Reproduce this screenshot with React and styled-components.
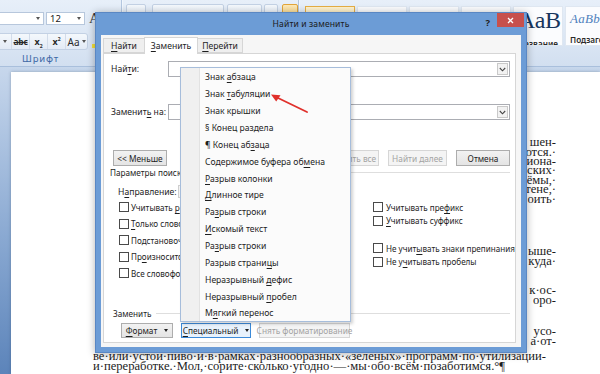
import React from "react";
import styled, { createGlobalStyle } from "styled-components";

const GlobalStyle = createGlobalStyle`
  html, body { margin: 0; padding: 0; background: #c6d6ec; }
  body { font-family: "Noto Sans", "Liberation Sans", Arial, sans-serif; }
  * { box-sizing: border-box; }
`;

const Screen = styled.div`
  position: relative;
  width: 600px;
  height: 374px;
  overflow: hidden;
  display: flex;
  flex-direction: column;
`;

/* ---------------- Ribbon ---------------- */
const Ribbon = styled.div`
  height: 67px;
  flex: none;
  display: flex;
  background: linear-gradient(#e7eff9, #dbe6f4 60%, #d2dff0);
  border-bottom: 1px solid #a9bfdc;
`;

const Group = styled.div`
  flex: none;
  width: ${(p) => p.$w}px;
  margin-left: ${(p) => p.$ml || 0}px;
  display: flex;
  flex-direction: column;
  border-right: 1px solid #b4c7e0;
  box-shadow: 1px 0 0 #f1f6fc;
  overflow: hidden;
`;

const GroupLabel = styled.div`
  margin-top: auto;
  height: 13px;
  line-height: 12px;
  text-align: center;
  font-size: 9.5px;
  letter-spacing: 0.8px;
  color: #3d67a5;
`;

const RibbonRow = styled.div`
  display: flex;
  align-items: center;
  gap: ${(p) => p.$gap || 0}px;
  height: ${(p) => p.$h}px;
  margin-top: ${(p) => p.$mt}px;
`;

const Combo = styled.div`
  width: ${(p) => p.$w}px;
  height: 13px;
  background: #fff;
  border: 1px solid #b7c7dc;
  display: flex;
  align-items: center;
  justify-content: space-between;
  padding: 0 3px;
  font-size: 9.5px;
  color: #222;
`;

const TinyArrow = styled.span`
  width: 0;
  height: 0;
  border-left: 2.5px solid transparent;
  border-right: 2.5px solid transparent;
  border-top: 3px solid ${(p) => p.$c || "#555"};
  flex: none;
`;

const BigA = styled.span`
  font-family: "Liberation Serif", serif;
  font-size: 15px;
  color: #333;
  margin-left: 2px;
`;

const IconStrip = styled.div`
  display: flex;
  height: 17px;
  border: 1px solid #c3d1e4;
  border-radius: 3px;
  background: linear-gradient(#f4f8fc, #e3ebf6);
`;

const IconBtn = styled.div`
  width: ${(p) => p.$w}px;
  display: flex;
  align-items: center;
  justify-content: ${(p) => p.$jc || "center"};
  padding-right: ${(p) => p.$pr || 0}px;
  gap: 2px;
  border-right: 1px solid #d2dcea;
  font-size: 9px;
  font-weight: 700;
  color: #2a2a2a;
  &:last-child { border-right: none; }
`;

const Strike = styled.span`
  text-decoration: line-through;
  font-size: 8.5px;
  letter-spacing: -0.3px;
`;

const Highlight = styled.span`
  display: block;
  width: 8px;
  height: 4px;
  margin-top: 8px;
  background: #f4e13a;
`;

const ParaBox = styled.div`
  width: ${(p) => p.$w}px;
  height: 16px;
  margin-left: ${(p) => p.$ml}px;
  border: 1px solid ${(p) => (p.$on ? "#e2a53a" : "#c3d1e4")};
  border-radius: 2px;
  background: ${(p) => (p.$on ? "linear-gradient(#fde9b8, #f9d37c)" : "linear-gradient(#f4f8fc, #e3ebf6)")};
`;

const Gallery = styled.div`
  display: flex;
  gap: 2px;
  margin-top: 6px;
  padding-left: 6px;
`;

const StyleItem = styled.div`
  width: 50px;
  height: 40px;
  flex: none;
  display: flex;
  flex-direction: column;
  padding: 0 4px;
  overflow: hidden;
  border: 1px solid ${(p) => (p.$on ? "#e6ae45" : "#dfe7f1")};
  background: ${(p) => (p.$on ? "linear-gradient(#fff3cf, #fde3a0)" : "#fbfcfe")};
`;

const Sample = styled.div`
  height: 27px;
  display: flex;
  align-items: center;
  white-space: nowrap;
  font-family: "Liberation Serif", "DejaVu Serif", serif;
  font-size: ${(p) => p.$fs}px;
  font-style: ${(p) => (p.$it ? "italic" : "normal")};
  color: ${(p) => p.$c};
  letter-spacing: ${(p) => (p.$it ? "0.3px" : "-0.5px")};
`;

const StyleName = styled.div`
  font-size: 8.2px;
  white-space: nowrap;
  color: #2b2b2b;
  font-weight: 600;
  margin-top: 4px;
`;

/* ---------------- Document ---------------- */
const DocArea = styled.div`
  flex: 1;
  display: flex;
  padding-top: 5px;
  background: linear-gradient(#c7d7ec, #8aa9d2 55%, #5c84ba);
`;

const Page = styled.div`
  flex: 1;
  margin-left: 11px;
  background: #fff;
  padding: 66.3px 0 0 82px;
  box-shadow: 0 0 3px rgba(40, 60, 90, 0.35);
`;

const Para = styled.div`
  margin-top: ${(p) => p.$mt}px;
`;

const Line = styled.div`
  width: 463px;
  height: 9.4px;
  text-align: ${(p) => (p.$end ? "right" : "left")};
  white-space: nowrap;
  font-family: "Liberation Serif", "DejaVu Serif", serif;
  font-size: 12.6px;
  line-height: 9.4px;
  color: #1c1c1c;
`;

/* ---------------- Dialog ---------------- */
const Dialog = styled.div`
  position: absolute;
  left: 95px;
  top: 12px;
  width: 432px;
  height: 341px;
  background: #6c9cd6;
  border: 1px solid #5a87c3;
  display: flex;
  flex-direction: column;
  box-shadow: 0 1px 8px rgba(0, 0, 0, 0.3);
`;

const TitleBar = styled.div`
  height: 22px;
  flex: none;
  display: grid;
  grid-template-columns: 1fr auto 1fr;
  align-items: center;
`;

const Title = styled.div`
  grid-column: 2;
  font-size: 8.6px;
  color: #1b1b1b;
  letter-spacing: 0.1px;
`;

const TitleControls = styled.div`
  justify-self: end;
  align-self: start;
  display: flex;
  align-items: flex-start;
  gap: 7px;
  margin-right: 2px;
`;

const Help = styled.span`
  font-size: 9.5px;
  font-weight: 700;
  color: #1e1e1e;
  margin-top: 3px;
`;

const Close = styled.div`
  width: 27px;
  height: 14px;
  background: #c7504c;
  display: flex;
  align-items: center;
  justify-content: center;
`;

const Client = styled.div`
  flex: 1;
  margin: 0 5px 5px;
  background: #f6f6f6;
  padding: 2px 5px 4px 2px;
  display: flex;
  flex-direction: column;
`;

const Tabs = styled.div`
  display: flex;
  align-items: flex-end;
  height: 16px;
  position: relative;
  z-index: 1;
`;

const Tab = styled.div`
  height: ${(p) => (p.$active ? 17 : 15)}px;
  margin-bottom: ${(p) => (p.$active ? -1 : 0)}px;
  padding: 0 ${(p) => p.$px}px;
  display: flex;
  align-items: center;
  font-size: 8.6px;
  color: #1e1e1e;
  background: ${(p) => (p.$active ? "#fff" : "#efefef")};
  border: 1px solid #d6d6d6;
  border-bottom: ${(p) => (p.$active ? "none" : "1px solid #d6d6d6")};
  margin-left: ${(p) => (p.$active ? -1 : 0)}px;
  margin-right: ${(p) => (p.$active ? -1 : 0)}px;
  position: relative;
  z-index: ${(p) => (p.$active ? 2 : 1)};
`;

const Panel = styled.div`
  flex: 1;
  background: #fff;
  border: 1px solid #d6d6d6;
  padding: 7px 5px 0 7px;
  display: flex;
  flex-direction: column;
  font-size: 8.6px;
  color: #1e1e1e;
`;

const FieldRow = styled.div`
  display: grid;
  grid-template-columns: 57px 1fr;
  align-items: center;
  height: 16px;
  white-space: nowrap;
  margin-top: ${(p) => p.$mt}px;
`;

const Input = styled.div`
  height: 16px;
  background: #fff;
  border: 1px solid #abadb3;
  display: flex;
  justify-content: flex-end;
  padding: 1px;
`;

const InputArrow = styled.div`
  width: 11px;
  border: 1px solid #c9c9c9;
  background: #f2f2f2;
  display: flex;
  align-items: center;
  justify-content: center;
`;

const Row = styled.div`
  display: flex;
  align-items: center;
  height: ${(p) => p.$h}px;
  margin-top: ${(p) => p.$mt}px;
  padding-left: ${(p) => p.$pl || 0}px;
  gap: ${(p) => p.$gap || 0}px;
  white-space: nowrap;
`;

const Spacer = styled.div`
  flex: 1;
`;

const Button = styled.div`
  width: ${(p) => p.$w}px;
  height: ${(p) => p.$h || 16}px;
  flex: none;
  display: flex;
  align-items: center;
  justify-content: center;
  gap: 7px;
  font-size: 8.3px;
  white-space: nowrap;
  color: ${(p) => (p.$disabled ? "#a3a3a3" : "#1e1e1e")};
  background: ${(p) =>
    p.$focus ? "#e8f2fc" : p.$disabled ? "#f4f4f4" : "linear-gradient(#f2f2f2, #e4e4e4)"};
  border: 1px solid ${(p) => (p.$focus ? "#3c8ad8" : p.$disabled ? "#d6d6d6" : "#adadad")};
`;

const GroupHead = styled.div`
  display: flex;
  align-items: center;
  gap: 5px;
  height: 11px;
  margin-top: ${(p) => p.$mt}px;
  margin-left: ${(p) => p.$ml || 0}px;
  font-size: 8.2px;
  white-space: nowrap;
`;

const HeadLine = styled.div`
  flex: 1;
  height: 1px;
  background: #dedede;
`;

const DirLabel = styled.span`
  width: 60px;
`;

const DirCombo = styled.div`
  width: 100px;
  height: 13px;
  border: 1px solid #cfcfcf;
  background: #f5f5f5;
`;

const Options = styled.div`
  display: grid;
  grid-template-columns: 254px 1fr;
  margin-top: 2px;
  padding-left: 8px;
`;

const OptCol = styled.div`
  display: flex;
  flex-direction: column;
  gap: ${(p) => p.$gap}px;
`;

const Check = styled.div`
  display: flex;
  align-items: center;
  height: 14px;
  gap: ${(p) => p.$gap}px;
  margin-top: ${(p) => p.$mt || 0}px;
  white-space: nowrap;
  font-size: 8.1px;
`;

const Box = styled.span`
  width: 10px;
  height: 10px;
  flex: none;
  border: 1px solid #4a4a4a;
  background: #fff;
`;

const U = styled.u`
  text-decoration: underline;
  text-underline-offset: 1.5px;
  text-decoration-thickness: 1px;
`;

/* ---------------- Menu ---------------- */
const Menu = styled.div`
  position: absolute;
  left: 180px;
  top: 67px;
  width: 171px;
  height: 255px;
  padding: 1px;
  border: 1px solid #a6bddb;
  background: linear-gradient(to right, #f0f0f0 0 18px, #e2e2e2 18px 19px, #fbfbfb 19px);
  box-shadow: 2px 2px 3px rgba(0, 0, 0, 0.18);
  display: flex;
  flex-direction: column;
  z-index: 5;
`;

const MenuItem = styled.div`
  height: 16.86px;
  flex: none;
  display: flex;
  align-items: center;
  padding-left: 23px;
  font-size: 8.6px;
  color: #1e1e1e;
  white-space: pre;
`;

const ArrowSvg = styled.svg`
  position: absolute;
  left: 262px;
  top: 86px;
  z-index: 6;
`;

/* ---------------- Data ---------------- */
const paras = [
  { mt: 0, lines: ["шен-", "ются.·", "циона-", "ских·", "ёмы,·", "тене,·", "оить·", ""] },
  { mt: 34, lines: ["ыше-", "куда·", ""] },
  { mt: 10.6, lines: ["к·ос-", "оро-", ""] },
  { mt: 12.8, lines: ["усо-", "а·от-"] },
];

const menuItems = [
  ["Знак ", <U key="u">а</U>, "бзаца"],
  ["Знак ", <U key="u">т</U>, "абуляции"],
  ["Знак крышки"],
  ["§ Конец раздела"],
  ["¶ Конец аб", <U key="u">з</U>, "аца"],
  ["Содержимое буфера об", <U key="u">м</U>, "ена"],
  [<U key="u">Р</U>, "азрыв колонки"],
  [<U key="u">Д</U>, "линное тире"],
  ["Ра", <U key="u">з</U>, "рыв строки"],
  [<U key="u">И</U>, "скомый текст"],
  ["Ра", <U key="u">з</U>, "рыв строки"],
  ["Разрыв страни", <U key="u">ц</U>, "ы"],
  ["Неразрывный ", <U key="u">д</U>, "ефис"],
  ["Неразрывный ", <U key="u">п</U>, "робел"],
  ["М", <U key="u">я</U>, "гкий перенос"],
];

const Chevron = () => (
  <svg width="7" height="5" viewBox="0 0 7 5">
    <path d="M0.8 1 L3.5 3.8 L6.2 1" fill="none" stroke="#444" strokeWidth="1.1" />
  </svg>
);

export default function App() {
  return (
    <Screen>
      <GlobalStyle />
      <Ribbon>
        <Group $w={162} $ml={-40}>
          <RibbonRow $h={13} $mt={12} $gap={2}>
            <Combo $w={84}>
              <span />
              <TinyArrow />
            </Combo>
            <Combo $w={39}>
              <span>12</span>
              <TinyArrow />
            </Combo>
            <BigA>A</BigA>
          </RibbonRow>
          <RibbonRow $h={17} $mt={8}>
            <IconStrip>
              <IconBtn $w={14} />
              <IconBtn $w={14} />
              <IconBtn $w={23} $jc="flex-end" $pr={4}>
                <TinyArrow />
              </IconBtn>
              <IconBtn $w={18}>
                <Strike>abc</Strike>
              </IconBtn>
              <IconBtn $w={18}>
                <span>
                  x<sub style={{ fontSize: 5 }}>2</sub>
                </span>
              </IconBtn>
              <IconBtn $w={18}>
                <span>
                  x<sup style={{ fontSize: 5 }}>2</sup>
                </span>
              </IconBtn>
              <IconBtn $w={21}>
                <span style={{ fontWeight: 400, fontSize: 10 }}>Aa</span>
                <TinyArrow />
              </IconBtn>
            </IconStrip>
            <IconBtn $w={16}>
              <Highlight />
            </IconBtn>
          </RibbonRow>
          <GroupLabel>Шрифт</GroupLabel>
        </Group>
        <Group $w={177}>
          <RibbonRow $h={16} $mt={4}>
            <ParaBox $w={20} $ml={4} />
            <ParaBox $w={72} $ml={6} />
            <ParaBox $w={35} $ml={3} />
            <ParaBox $w={14} $ml={2} />
            <ParaBox $w={16} $ml={4} $on />
          </RibbonRow>
        </Group>
        <Group $w={340}>
          <Gallery>
            <StyleItem $on />
            <StyleItem />
            <StyleItem />
            <StyleItem />
            <StyleItem>
              <Sample $fs={24} $c="#17365d">AaB</Sample>
              <StyleName>Название</StyleName>
            </StyleItem>
            <StyleItem>
              <Sample $fs={13} $c="#4f81bd" $it>
                AaBbC
              </Sample>
              <StyleName>Подзаголовок</StyleName>
            </StyleItem>
          </Gallery>
        </Group>
      </Ribbon>

      <DocArea>
        <Page>
          {paras.map((p, i) => (
            <Para key={i} $mt={p.mt}>
              {p.lines.map((t, j) => (
                <Line key={j} $end>
                  {t}
                </Line>
              ))}
            </Para>
          ))}
          <Para $mt={6.2}>
            <Line>ве·или·устой·пиво·и·в·рамках·разнообразных·«зеленых»·программ·по·утилизации-</Line>
            <Line>и·переработке.·Мол,·сорите·сколько·угодно·—·мы·обо·всём·позаботимся.°¶</Line>
          </Para>
        </Page>
      </DocArea>

      <Dialog>
        <TitleBar>
          <Title>Найти и заменить</Title>
          <TitleControls>
            <Help>?</Help>
            <Close>
              <svg width="7" height="7" viewBox="0 0 7 7">
                <path d="M1 1 L6 6 M6 1 L1 6" stroke="#fff" strokeWidth="1.3" />
              </svg>
            </Close>
          </TitleControls>
        </TitleBar>
        <Client>
          <Tabs>
            <Tab $px={7}>
              <span>
                <U>Н</U>айти
              </span>
            </Tab>
            <Tab $px={6} $active>
              <span>
                <U>З</U>аменить
              </span>
            </Tab>
            <Tab $px={4}>
              <span>
                <U>П</U>ерейти
              </span>
            </Tab>
          </Tabs>
          <Panel>
            <FieldRow $mt={0}>
              <span>
                Най<U>т</U>и:
              </span>
              <Input>
                <InputArrow>
                  <Chevron />
                </InputArrow>
              </Input>
            </FieldRow>
            <FieldRow $mt={27}>
              <span>
                Заменит<U>ь</U> на:
              </span>
              <Input>
                <InputArrow>
                  <Chevron />
                </InputArrow>
              </Input>
            </FieldRow>
            <Row $h={16} $mt={30} $pl={2} $gap={9}>
              <Button $w={54}>&lt;&lt; Меньше</Button>
              <Spacer />
              <Button $w={60}>Заменить</Button>
              <Button $w={60} $disabled>
                Заменить все
              </Button>
              <Button $w={59} $disabled>
                Найти далее
              </Button>
              <Button $w={54}>Отмена</Button>
            </Row>
            <GroupHead $mt={1} $ml={-1}>
              <span>Параметры поиска</span>
              <HeadLine />
            </GroupHead>
            <Row $h={13} $mt={7} $pl={7}>
              <DirLabel>
                Н<U>а</U>правление:
              </DirLabel>
              <DirCombo />
            </Row>
            <Options>
              <OptCol $gap={2.5}>
                <Check $gap={2}>
                  <Box />
                  <span>
                    Учитывать <U>р</U>егистр
                  </span>
                </Check>
                <Check $gap={2}>
                  <Box />
                  <span>
                    <U>Т</U>олько слово целиком
                  </span>
                </Check>
                <Check $gap={2}>
                  <Box />
                  <span>Подстановочные знаки</span>
                </Check>
                <Check $gap={2}>
                  <Box />
                  <span>
                    Пр<U>о</U>износится как
                  </span>
                </Check>
                <Check $gap={2}>
                  <Box />
                  <span>Все словоформы</span>
                </Check>
              </OptCol>
              <OptCol $gap={0}>
                <Check $gap={3}>
                  <Box />
                  <span>
                    Учитывать пре<U>ф</U>икс
                  </span>
                </Check>
                <Check $gap={3} $mt={-0.5}>
                  <Box />
                  <span>
                    <U>У</U>читывать суффикс
                  </span>
                </Check>
                <Check $gap={3} $mt={13.5}>
                  <Box />
                  <span>
                    Не учит<U>ы</U>вать знаки препинания
                  </span>
                </Check>
                <Check $gap={3} $mt={-0.5}>
                  <Box />
                  <span>
                    Не у<U>ч</U>итывать пробелы
                  </span>
                </Check>
              </OptCol>
            </Options>
            <GroupHead $mt={28} $ml={2}>
              <span>Заменить</span>
              <HeadLine />
            </GroupHead>
            <Row $h={15} $mt={4} $pl={10} $gap={8}>
              <Button $w={52} $h={15}>
                <span>
                  <U>Ф</U>ормат
                </span>
                <TinyArrow $c="#222" />
              </Button>
              <Button $w={70} $h={15} $focus>
                <span>
                  <U>С</U>пециальный
                </span>
                <TinyArrow $c="#222" />
              </Button>
              <Button $w={91} $h={15} $disabled>
                Снять форматирование
              </Button>
            </Row>
          </Panel>
        </Client>
      </Dialog>

      <Menu>
        {menuItems.map((parts, i) => (
          <MenuItem key={i}>
            <span>{parts}</span>
          </MenuItem>
        ))}
      </Menu>

      <ArrowSvg width="50" height="32" viewBox="0 0 50 32">
        <path d="M45 26 L14 11" stroke="#e0302b" strokeWidth="1.8" strokeLinecap="round" />
        <path d="M9 8.5 L18.5 9.2 L14.2 15.6 Z" fill="#e0302b" />
      </ArrowSvg>
    </Screen>
  );
}
